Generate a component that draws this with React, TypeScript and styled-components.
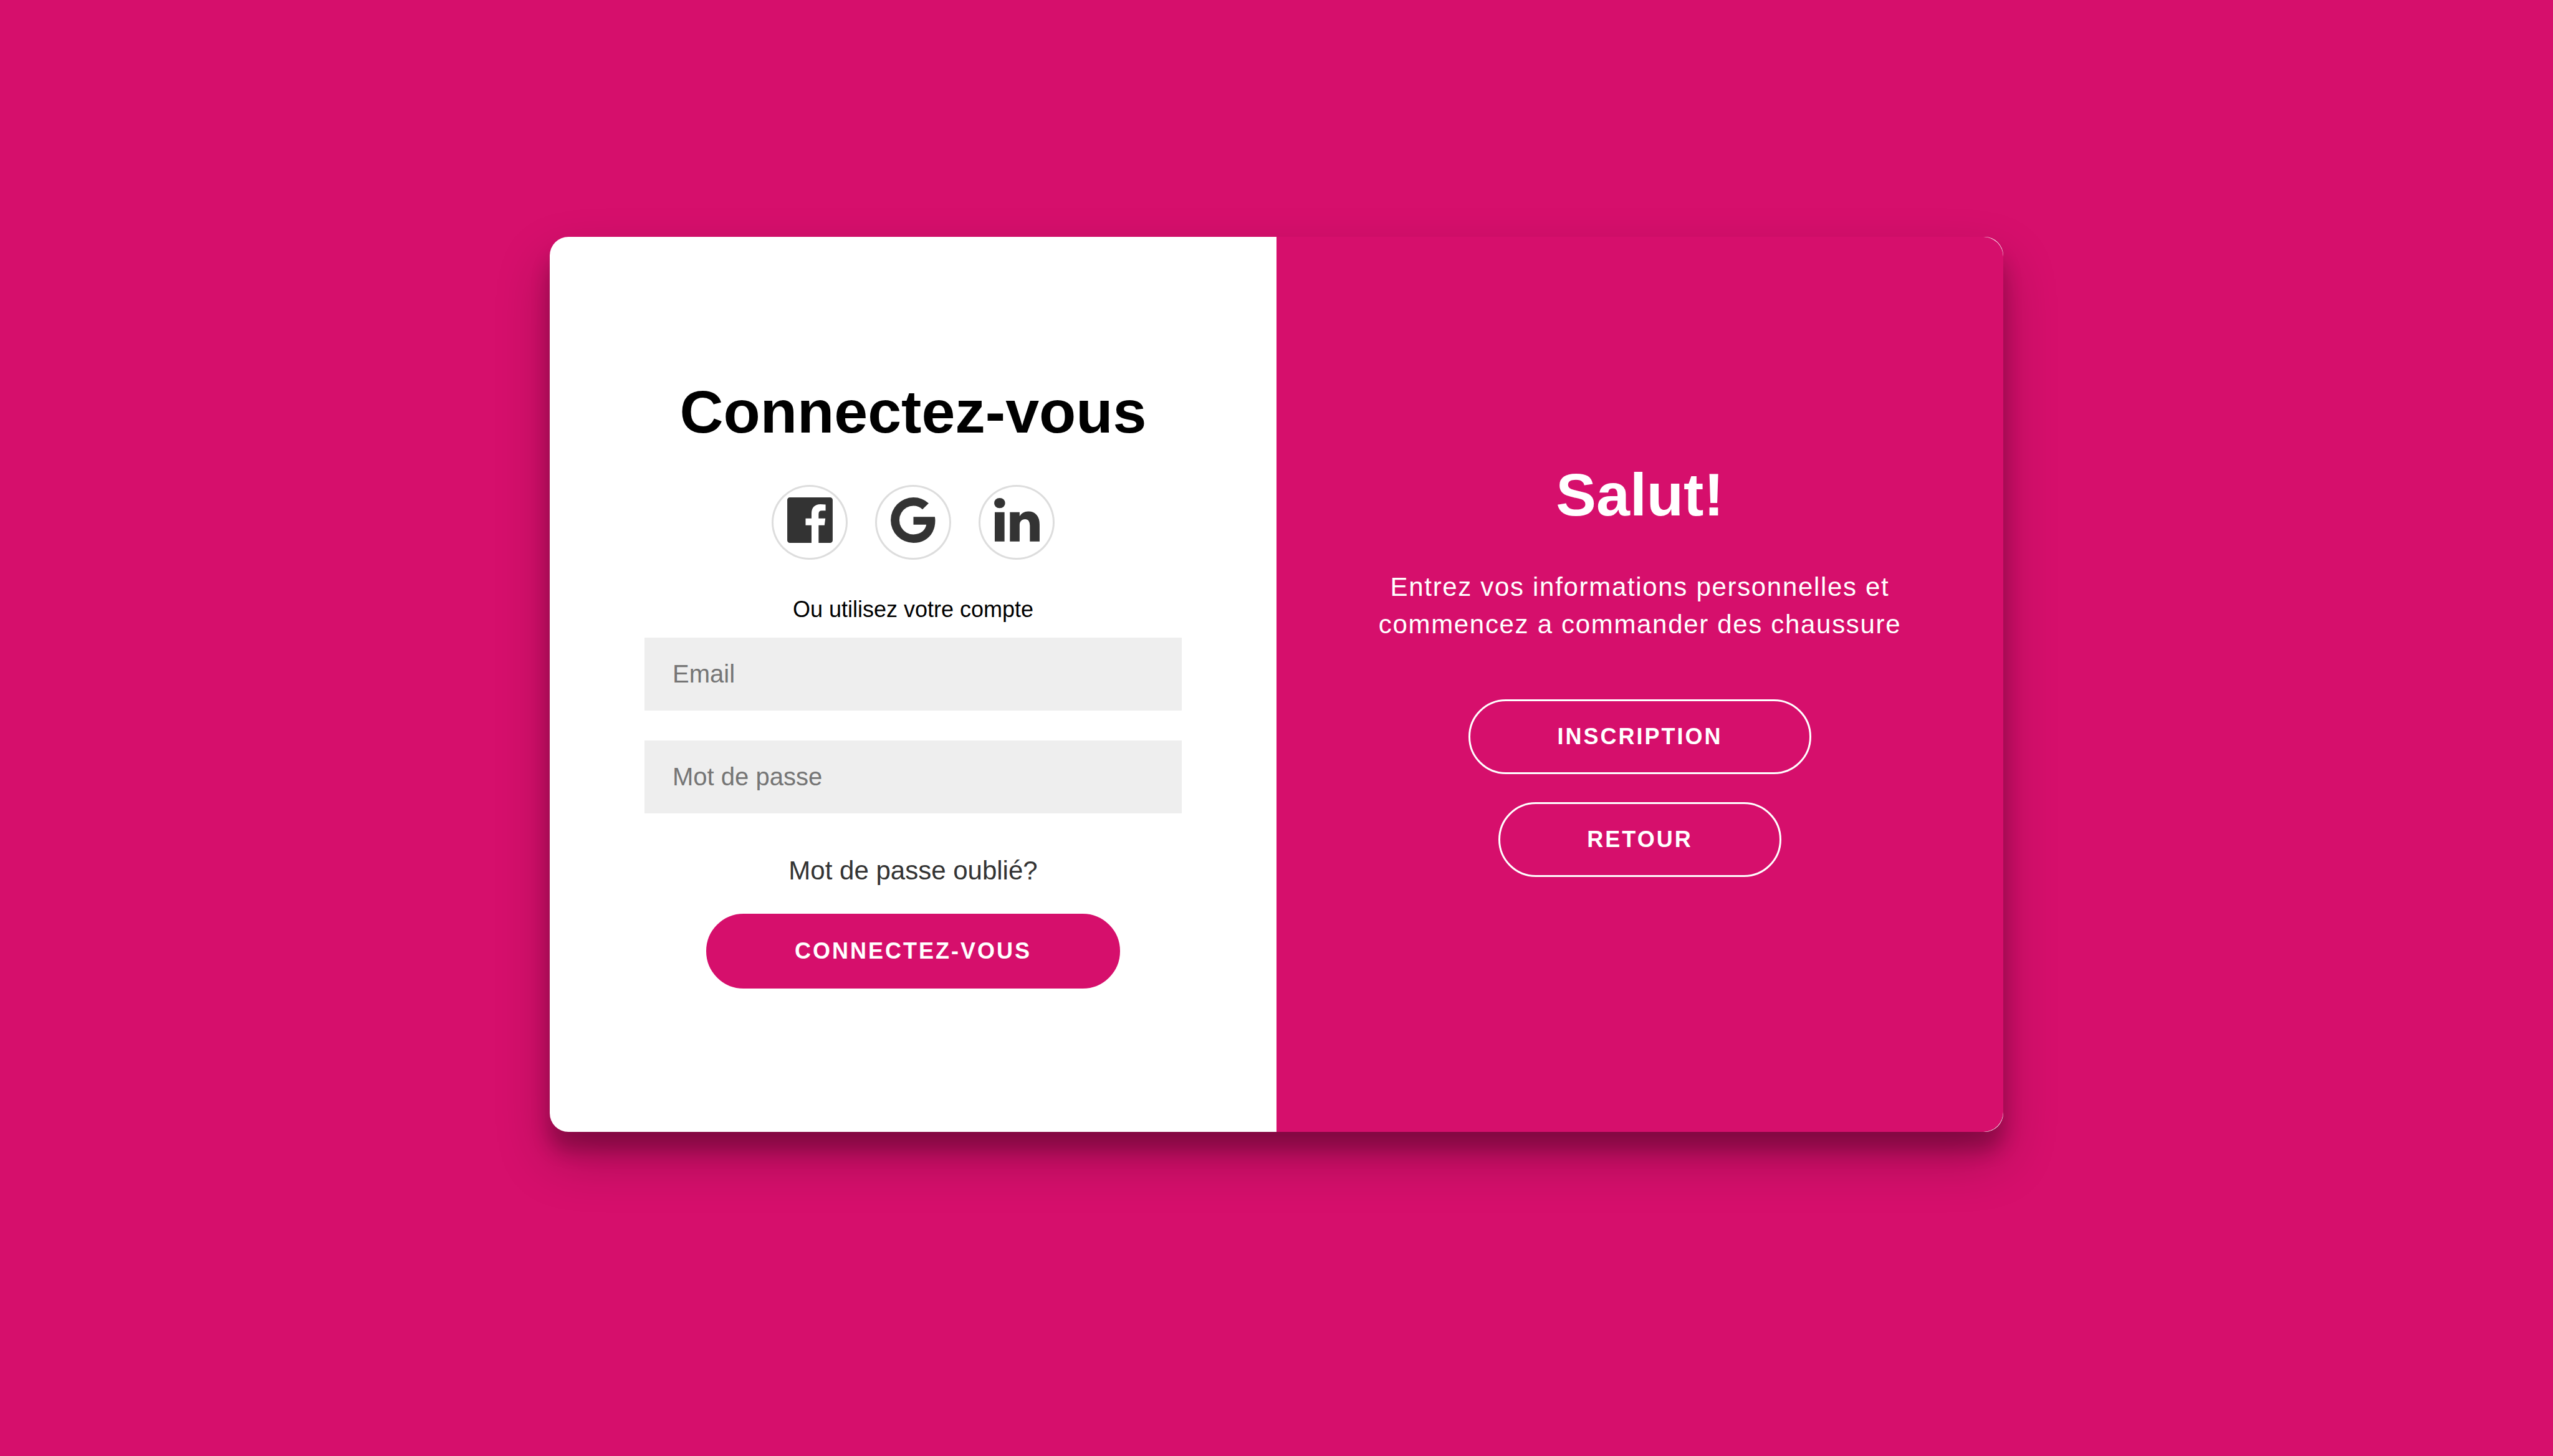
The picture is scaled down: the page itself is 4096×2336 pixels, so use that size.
import React from "react";
import styled, { createGlobalStyle } from "styled-components";

const pink = "#d60f6c";

const GlobalStyle = createGlobalStyle`
  *, *::before, *::after { box-sizing: border-box; }
  body {
    margin: 0;
    background: ${pink};
    font-family: "Liberation Sans", Arial, Helvetica, sans-serif;
  }
`;

const Page = styled.main`
  display: flex;
  align-items: center;
  justify-content: center;
  min-height: 100vh;
  padding-bottom: 140px;
`;

const Card = styled.div`
  display: grid;
  grid-template-columns: 1fr 1fr;
  width: 100%;
  max-width: 2332px;
  min-height: 1436px;
  overflow: hidden;
  border-radius: 30px;
  background: #fff;
  box-shadow: 0 42px 84px rgba(0, 0, 0, 0.25), 0 30px 30px rgba(0, 0, 0, 0.22);
`;

const LoginForm = styled.form`
  display: flex;
  flex-direction: column;
  align-items: center;
  justify-content: center;
  padding: 0 152px 4px;
`;

const Welcome = styled.section`
  display: flex;
  flex-direction: column;
  align-items: center;
  justify-content: center;
  padding: 0 120px 50px;
  border-radius: 0 32px 32px 0;
  background: ${pink};
  color: #fff;
  text-align: center;
`;

const Title = styled.h1`
  margin: 0;
  font-size: 97px;
  line-height: 108px;
  font-weight: bold;
`;

const SocialLinks = styled.div`
  display: flex;
  gap: 44px;
  margin: 63px 0 59px;
`;

const SocialLink = styled.a`
  display: flex;
  align-items: center;
  justify-content: center;
  width: 122px;
  height: 120px;
  padding-bottom: 6px;
  border: 3px solid #ddd;
  border-radius: 50%;
  color: #333;
`;

const Glyph = styled.svg`
  width: 85px;
  height: 85px;
  fill: currentColor;
`;

const Hint = styled.span`
  margin-bottom: 24px;
  font-size: 36px;
  line-height: 42px;
`;

const Fields = styled.div`
  display: grid;
  gap: 48px;
  width: 100%;
`;

const Field = styled.input`
  width: 100%;
  height: 117px;
  padding: 0 45px;
  border: 0;
  border-radius: 0;
  background: #eee;
  font-family: inherit;
  font-size: 40px;

  &::placeholder {
    color: #757575;
    opacity: 1;
  }
`;

const ForgotLink = styled.a`
  margin: 68px 0 45px;
  color: #333;
  font-size: 42px;
  line-height: 48px;
  text-decoration: none;
`;

const Button = styled.button<{ $outlined?: boolean }>`
  height: 120px;
  padding: 0 139px;
  border: 3px solid ${(p) => (p.$outlined ? "#fff" : pink)};
  border-radius: 60px;
  background: ${pink};
  color: #fff;
  font-family: inherit;
  font-size: 36px;
  font-weight: bold;
  letter-spacing: 3px;
  text-transform: uppercase;
  cursor: pointer;
`;

const Message = styled.p`
  margin: 64px 0 90px;
  font-size: 42px;
  line-height: 60px;
  letter-spacing: 0.04em;
`;

const Actions = styled.div`
  display: flex;
  flex-direction: column;
  align-items: center;
  gap: 45px;
`;

const socials = [
  {
    name: "Facebook",
    path: "M1579 128q35 0 60 25t25 60v1366q0 35-25 60t-60 25h-391v-595h199l30-232h-229v-148q0-56 23.5-84t91.5-28l122-1v-207q-63-9-178-9-136 0-217.5 80t-81.5 226v171h-200v232h200v595h-735q-35 0-60-25t-25-60v-1366q0-35 25-60t60-25h1366z",
  },
  {
    name: "Google",
    path: "M896 786h725q12 67 12 128 0 217-91 387.5t-259.5 266.5-386.5 96q-157 0-299-60.5t-245-163.5-163.5-245-60.5-299 60.5-299 163.5-245 245-163.5 299-60.5q300 0 515 201l-209 201q-123-119-306-119-129 0-238.5 65t-173.5 176.5-64 243.5 64 243.5 173.5 176.5 238.5 65q87 0 160-24t120-60 82-82 51.5-87 22.5-78h-436v-264z",
  },
  {
    name: "LinkedIn",
    path: "M477 625v991h-330v-991h330zm21-306q1 73-50.5 122t-135.5 49h-2q-82 0-132-49t-50-122q0-74 51.5-122.5t134.5-48.5 133 48.5 51 122.5zm1166 729v568h-329v-530q0-105-40.5-164.5t-126.5-59.5q-63 0-105.5 34.5t-63.5 85.5q-11 30-11 81v553h-329q2-399 2-647t-1-296l-1-48h329v144h-2q20-32 41-56t56.5-52 87-43.5 114.5-15.5q171 0 275 113.5t104 332.5z",
  },
];

export default function App() {
  return (
    <>
      <GlobalStyle />
      <Page>
        <Card>
          <LoginForm onSubmit={(e) => e.preventDefault()}>
            <Title>Connectez-vous</Title>
            <SocialLinks>
              {socials.map((s) => (
                <SocialLink key={s.name} href="#" aria-label={s.name}>
                  <Glyph viewBox="0 0 1792 1792" aria-hidden="true">
                    <path d={s.path} />
                  </Glyph>
                </SocialLink>
              ))}
            </SocialLinks>
            <Hint>Ou utilisez votre compte</Hint>
            <Fields>
              <Field type="email" placeholder="Email" aria-label="Email" />
              <Field type="password" placeholder="Mot de passe" aria-label="Mot de passe" />
            </Fields>
            <ForgotLink href="#">Mot de passe oublié?</ForgotLink>
            <Button type="submit">Connectez-vous</Button>
          </LoginForm>
          <Welcome>
            <Title as="h2">Salut!</Title>
            <Message>
              Entrez vos informations personnelles et commencez a commander des chaussure
            </Message>
            <Actions>
              <Button type="button" $outlined>Inscription</Button>
              <Button type="button" $outlined>Retour</Button>
            </Actions>
          </Welcome>
        </Card>
      </Page>
    </>
  );
}
